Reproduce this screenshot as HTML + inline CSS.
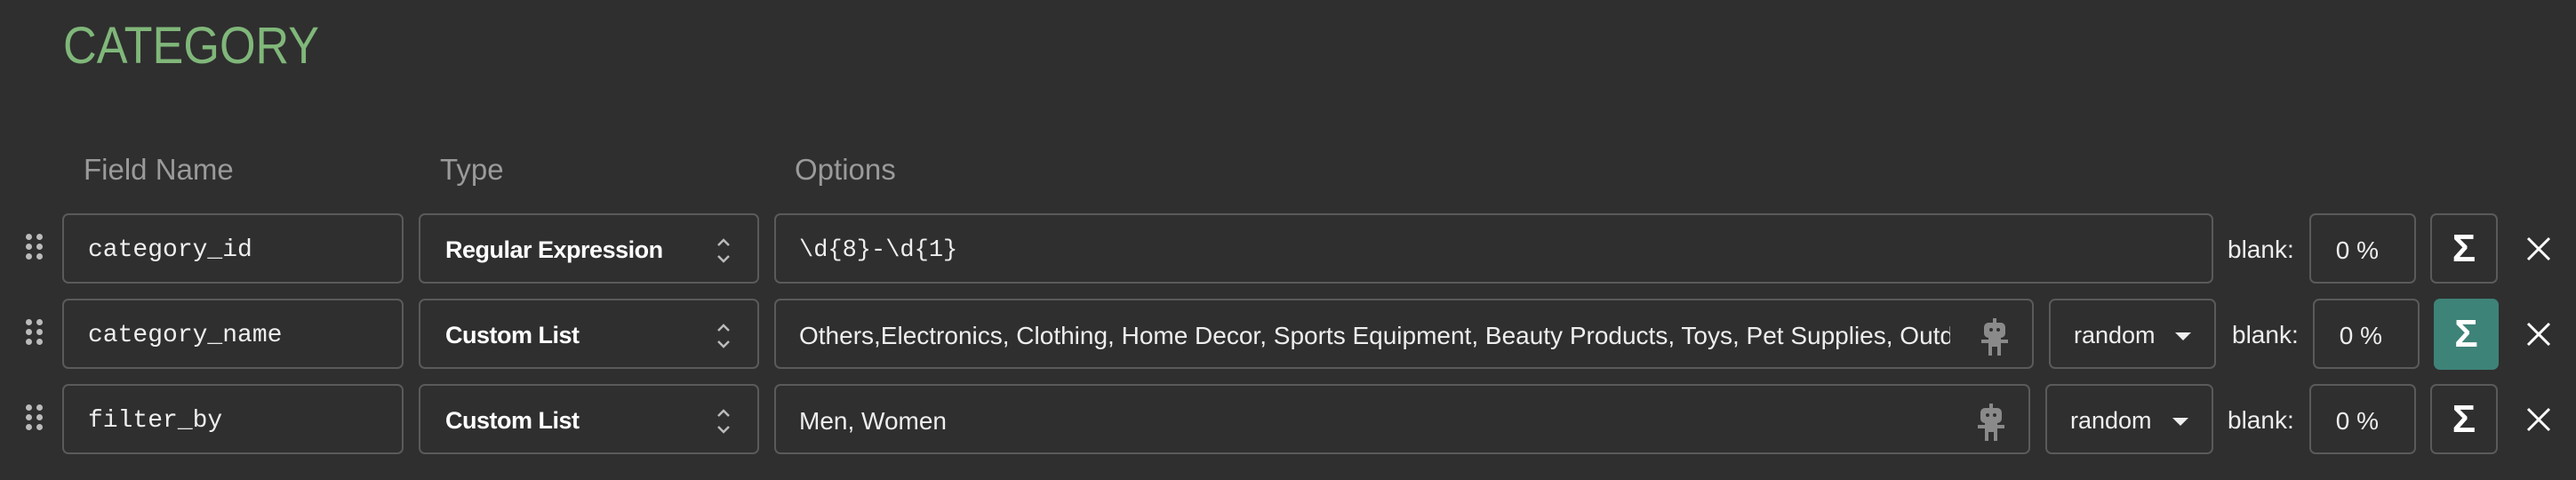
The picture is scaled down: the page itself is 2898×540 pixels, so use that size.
<!DOCTYPE html>
<html><head><meta charset="utf-8"><style>
*{box-sizing:border-box;margin:0;padding:0}
body{width:2898px;height:540px;background:#2f2f2f;position:relative;overflow:hidden;font-family:"Liberation Sans",sans-serif;color:#fff}
.a{position:absolute}
.box{position:absolute;border:2px solid #5a5a5a;border-radius:7px;display:flex;align-items:center;overflow:hidden;white-space:nowrap;padding-top:4px}
.mono{font-family:"Liberation Mono",monospace;font-size:28px;padding-left:27px;color:#eee}
.type{font-weight:bold;font-size:27px;padding-left:28px;letter-spacing:-0.5px}
.opt{font-size:28px;padding-left:26px;color:#eee}
.hdr{font-size:33px;color:#9a9a9a;top:172px}
.blank{font-size:28px;color:#eee}
.pct{justify-content:flex-end;padding-right:40px;font-size:28px;color:#eee}
.sig{justify-content:center;font-size:44px;font-weight:bold;padding-top:0}
.rnd{font-size:27px;padding-left:26px;color:#eee}
.tri{position:absolute;right:26px;top:36px;width:0;height:0;border-left:9px solid transparent;border-right:9px solid transparent;border-top:9px solid #eee}
.dots{position:absolute;left:29px;width:20px;height:30px}
.dots i{position:absolute;width:7px;height:7px;border-radius:50%;background:#bbb}
</style></head><body>
<div class="a" style="left:71px;top:18px;font-size:58px;color:#80b77a;transform:scaleX(0.9);transform-origin:left">CATEGORY</div>
<div class="a hdr" style="left:94px">Field Name</div>
<div class="a hdr" style="left:495px">Type</div>
<div class="a hdr" style="left:894px">Options</div>

<div class="dots" style="top:263px"><i style="left:0;top:0"></i><i style="left:12px;top:0"></i><i style="left:0;top:11px"></i><i style="left:12px;top:11px"></i><i style="left:0;top:22px"></i><i style="left:12px;top:22px"></i></div>
<div class="dots" style="top:359px"><i style="left:0;top:0"></i><i style="left:12px;top:0"></i><i style="left:0;top:11px"></i><i style="left:12px;top:11px"></i><i style="left:0;top:22px"></i><i style="left:12px;top:22px"></i></div>
<div class="dots" style="top:455px"><i style="left:0;top:0"></i><i style="left:12px;top:0"></i><i style="left:0;top:11px"></i><i style="left:12px;top:11px"></i><i style="left:0;top:22px"></i><i style="left:12px;top:22px"></i></div>

<!-- row1 -->
<div class="box mono" style="left:70px;top:240px;width:384px;height:79px">category_id</div>
<div class="box type" style="left:471px;top:240px;width:383px;height:79px">Regular Expression<svg class="a" style="right:30px;top:25px" width="16" height="30" viewBox="0 0 16 30"><path d="M2 9 L8 3 L14 9 M2 21 L8 27 L14 21" stroke="#bbb" stroke-width="2.5" fill="none"/></svg></div>
<div class="box mono" style="left:871px;top:240px;width:1619px;height:79px;font-size:27px;padding-left:26px">\d{8}-\d{1}</div>
<div class="a blank" style="left:2506px;top:265px">blank:</div>
<div class="box pct" style="left:2598px;top:240px;width:120px;height:79px">0 %</div>
<div class="box sig" style="left:2734px;top:240px;width:76px;height:79px">Σ</div>
<svg class="a" style="left:2842px;top:266px" width="28" height="28" viewBox="0 0 28 28"><path d="M2 2L26 26M26 2L2 26" stroke="#fff" stroke-width="3"/></svg>

<!-- row2 -->
<div class="box mono" style="left:70px;top:336px;width:384px;height:79px">category_name</div>
<div class="box type" style="left:471px;top:336px;width:383px;height:79px">Custom List<svg class="a" style="right:30px;top:25px" width="16" height="30" viewBox="0 0 16 30"><path d="M2 9 L8 3 L14 9 M2 21 L8 27 L14 21" stroke="#bbb" stroke-width="2.5" fill="none"/></svg></div>
<div class="box opt" style="left:871px;top:336px;width:1417px;height:79px"><span style="display:block;width:1295px;overflow:hidden">Others,Electronics, Clothing, Home Decor, Sports Equipment, Beauty Products, Toys, Pet Supplies, Outdoor</span>
<svg class="a" style="left:1354px;top:20px" width="34" height="42" viewBox="0 0 34 42"><g fill="#8a8a8a"><rect x="15" y="0" width="4" height="5"/><rect x="5" y="5" width="24" height="17" rx="5"/><rect x="10" y="22" width="14" height="10"/><rect x="2" y="24" width="8" height="4"/><rect x="24" y="24" width="8" height="4"/><rect x="10" y="32" width="4" height="10"/><rect x="20" y="32" width="4" height="10"/></g><circle cx="13" cy="13" r="2" fill="#2f2f2f"/><circle cx="21" cy="13" r="2" fill="#2f2f2f"/></svg></div>
<div class="box rnd" style="left:2305px;top:336px;width:188px;height:79px">random<span class="tri"></span></div>
<div class="a blank" style="left:2511px;top:361px">blank:</div>
<div class="box pct" style="left:2602px;top:336px;width:120px;height:79px">0 %</div>
<div class="box sig" style="left:2738px;top:336px;width:73px;height:80px;background:#3e8378;border-color:#3e8378">Σ</div>
<svg class="a" style="left:2842px;top:362px" width="28" height="28" viewBox="0 0 28 28"><path d="M2 2L26 26M26 2L2 26" stroke="#fff" stroke-width="3"/></svg>

<!-- row3 -->
<div class="box mono" style="left:70px;top:432px;width:384px;height:79px">filter_by</div>
<div class="box type" style="left:471px;top:432px;width:383px;height:79px">Custom List<svg class="a" style="right:30px;top:25px" width="16" height="30" viewBox="0 0 16 30"><path d="M2 9 L8 3 L14 9 M2 21 L8 27 L14 21" stroke="#bbb" stroke-width="2.5" fill="none"/></svg></div>
<div class="box opt" style="left:871px;top:432px;width:1413px;height:79px">Men, Women
<svg class="a" style="left:1350px;top:20px" width="34" height="42" viewBox="0 0 34 42"><g fill="#8a8a8a"><rect x="15" y="0" width="4" height="5"/><rect x="5" y="5" width="24" height="17" rx="5"/><rect x="10" y="22" width="14" height="10"/><rect x="2" y="24" width="8" height="4"/><rect x="24" y="24" width="8" height="4"/><rect x="10" y="32" width="4" height="10"/><rect x="20" y="32" width="4" height="10"/></g><circle cx="13" cy="13" r="2" fill="#2f2f2f"/><circle cx="21" cy="13" r="2" fill="#2f2f2f"/></svg></div>
<div class="box rnd" style="left:2301px;top:432px;width:189px;height:79px">random<span class="tri"></span></div>
<div class="a blank" style="left:2506px;top:457px">blank:</div>
<div class="box pct" style="left:2598px;top:432px;width:120px;height:79px">0 %</div>
<div class="box sig" style="left:2734px;top:432px;width:76px;height:79px">Σ</div>
<svg class="a" style="left:2842px;top:458px" width="28" height="28" viewBox="0 0 28 28"><path d="M2 2L26 26M26 2L2 26" stroke="#fff" stroke-width="3"/></svg>
</body></html>
